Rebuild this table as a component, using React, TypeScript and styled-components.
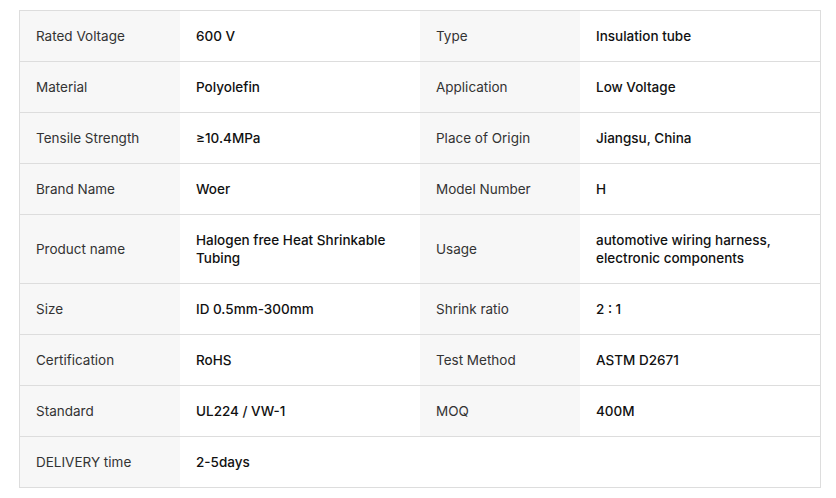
import React from "react";
import styled, { createGlobalStyle } from "styled-components";

const GlobalStyle = createGlobalStyle`
  html, body {
    margin: 0;
    padding: 0;
    background: #ffffff;
  }
  body {
    font-family: Inter, "Noto Sans", "Liberation Sans", sans-serif;
  }
`;

const Page = styled.div`
  padding: 10px 15px 10px 19px;
`;

const SpecGrid = styled.div`
  width: 800px;
  display: grid;
  grid-template-columns: 160px 240px 160px 240px;
  border: 1px solid #dddddd;
  border-bottom: none;
`;

const Cell = styled.div<{ $label?: boolean; $tall?: boolean; $span?: number }>`
  display: flex;
  align-items: center;
  min-height: ${(p) => (p.$tall ? 69 : 51)}px;
  padding: 8px 16px;
  box-sizing: border-box;
  border-bottom: 1px solid #dddddd;
  grid-column: span ${(p) => p.$span ?? 1};
  font-size: 13.5px;
  line-height: 18px;
  background: ${(p) => (p.$label ? "#f7f7f7" : "#ffffff")};
  color: ${(p) => (p.$label ? "#333333" : "#111111")};
  font-weight: ${(p) => (p.$label ? 400 : 500)};
`;

type Spec = [string, string];

const rows: Array<[Spec, Spec | null]> = [
  [["Rated Voltage", "600 V"], ["Type", "Insulation tube"]],
  [["Material", "Polyolefin"], ["Application", "Low Voltage"]],
  [["Tensile Strength", "≥10.4MPa"], ["Place of Origin", "Jiangsu, China"]],
  [["Brand Name", "Woer"], ["Model Number", "H"]],
  [
    ["Product name", "Halogen free Heat Shrinkable Tubing"],
    ["Usage", "automotive wiring harness, electronic components"],
  ],
  [["Size", "ID 0.5mm-300mm"], ["Shrink ratio", "2 : 1"]],
  [["Certification", "RoHS"], ["Test Method", "ASTM D2671"]],
  [["Standard", "UL224 / VW-1"], ["MOQ", "400M"]],
  [["DELIVERY time", "2-5days"], null],
];

export default function App() {
  return (
    <>
      <GlobalStyle />
      <Page>
        <SpecGrid>
          {rows.map(([left, right], i) => {
            const tall = i === 4;
            return (
              <React.Fragment key={i}>
                <Cell $label $tall={tall}>{left[0]}</Cell>
                <Cell $tall={tall}>{left[1]}</Cell>
                {right ? (
                  <>
                    <Cell $label $tall={tall}>{right[0]}</Cell>
                    <Cell $tall={tall}>{right[1]}</Cell>
                  </>
                ) : (
                  <Cell $span={2} />
                )}
              </React.Fragment>
            );
          })}
        </SpecGrid>
      </Page>
    </>
  );
}
